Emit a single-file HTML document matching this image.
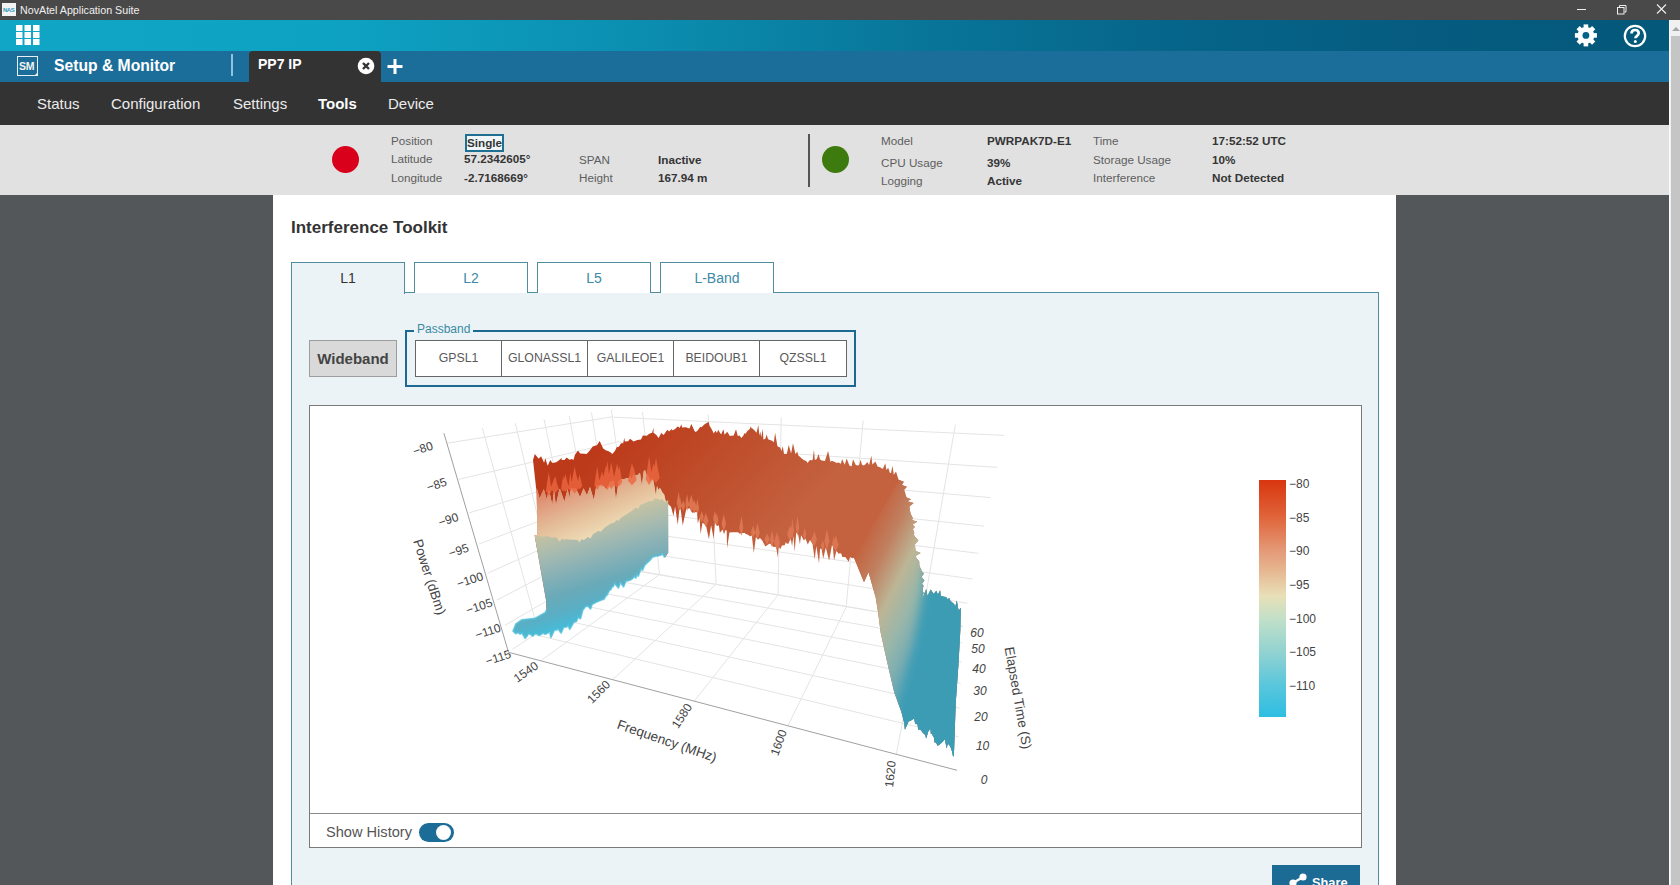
<!DOCTYPE html>
<html><head><meta charset="utf-8">
<style>
*{box-sizing:border-box;margin:0;padding:0}
html,body{width:1680px;height:885px;overflow:hidden;background:#53575a;font-family:"Liberation Sans",sans-serif}
.abs{position:absolute}
#titlebar{left:0;top:0;width:1680px;height:20px;background:#4a4949;color:#f0f0f0;font-size:10.7px}
#topbar{left:0;top:20px;width:1669px;height:31px;background:linear-gradient(90deg,#12a6c6 0%,#0ea2c2 20%,#0b8fb1 38%,#087699 55%,#06658a 70%,#055c80 85%,#04587a 100%)}
#appbar{left:0;top:51px;width:1669px;height:31px;background:#1c6e9a}
#nav{left:0;top:82px;width:1669px;height:43px;background:#333333;color:#ececec;font-size:15px}
#nav span{position:absolute;top:13px;line-height:17px;white-space:nowrap}
#status{left:0;top:125px;width:1669px;height:70px;background:#e1e1e1;font-size:11.7px}
#scroll{left:1669px;top:20px;width:11px;height:865px;background:#f0f0f0;border-left:1px solid #fdfdfd}
#panel{left:273px;top:195px;width:1123px;height:690px;background:#fff}
.lbl{position:absolute;color:#5e5e5e;white-space:nowrap;line-height:14px}
.val{position:absolute;color:#353535;font-weight:bold;white-space:nowrap;line-height:14px}
.tab{position:absolute;top:262px;width:114px;height:31px;border:1px solid #4f8e9f;border-bottom:none;background:#fff;color:#3d8aa6;font-size:14px;text-align:center;line-height:30px}
.pb{position:absolute;top:340px;height:37px;width:87px;border:1px solid #666;background:#fff;color:#595959;font-size:12.3px;text-align:center;line-height:35px}
</style></head>
<body>
<div id="titlebar" class="abs">
  <div class="abs" style="left:2px;top:3px;width:14px;height:13px;background:#f4f4f4"></div>
  <div class="abs" style="left:3px;top:7px;font-size:6px;line-height:6px;color:#2d9bc0;font-weight:bold;letter-spacing:-0.5px">NAS</div>
  <div class="abs" style="left:20px;top:3px;line-height:14px">NovAtel Application Suite</div>
  <div class="abs" style="left:1577px;top:9px;width:9px;height:1px;background:#eee"></div>
  <svg class="abs" style="left:1614px;top:2px" width="16" height="14"><rect x="3.5" y="5.5" width="6.5" height="6.5" fill="none" stroke="#eee" stroke-width="1"/><path d="M5.5 5V3.5H12V10H10.5" fill="none" stroke="#eee" stroke-width="1"/></svg>
  <svg class="abs" style="left:1654px;top:2px" width="16" height="14"><path d="M3 2.5l9 9M12 2.5l-9 9" stroke="#eee" stroke-width="1.1"/></svg>
</div>
<div id="topbar" class="abs">
  <svg class="abs" style="left:15px;top:4px" width="26" height="22"><g fill="#fff">
    <rect x="1" y="1" width="6.5" height="6" /><rect x="9.5" y="1" width="6.5" height="6"/><rect x="18" y="1" width="6.5" height="6"/>
    <rect x="1" y="8" width="6.5" height="6" /><rect x="9.5" y="8" width="6.5" height="6"/><rect x="18" y="8" width="6.5" height="6"/>
    <rect x="1" y="15" width="6.5" height="6" /><rect x="9.5" y="15" width="6.5" height="6"/><rect x="18" y="15" width="6.5" height="6"/>
  </g></svg>
  <svg class="abs" style="left:1572px;top:2px" width="28" height="28" viewBox="0 0 28 28"><g fill="#fff" transform="translate(13.9 13.4)"><circle r="8.4"/><rect x="-2.3" y="-11" width="4.6" height="5" transform="rotate(0)"/><rect x="-2.3" y="-11" width="4.6" height="5" transform="rotate(45)"/><rect x="-2.3" y="-11" width="4.6" height="5" transform="rotate(90)"/><rect x="-2.3" y="-11" width="4.6" height="5" transform="rotate(135)"/><rect x="-2.3" y="-11" width="4.6" height="5" transform="rotate(180)"/><rect x="-2.3" y="-11" width="4.6" height="5" transform="rotate(225)"/><rect x="-2.3" y="-11" width="4.6" height="5" transform="rotate(270)"/><rect x="-2.3" y="-11" width="4.6" height="5" transform="rotate(315)"/></g><circle cx="13.9" cy="13.4" r="3.4" fill="#05628a"/></svg>
  <svg class="abs" style="left:1621px;top:2px" width="28" height="28" viewBox="0 0 28 28">
    <circle cx="14" cy="14" r="10.2" fill="none" stroke="#fff" stroke-width="2.2"/>
    <path d="M10.5 11.6c0-2.3 1.5-3.6 3.6-3.6s3.6 1.3 3.6 3.3c0 2.5-3.3 2.6-3.3 5" fill="none" stroke="#fff" stroke-width="2.7"/>
    <circle cx="14.3" cy="19.6" r="1.5" fill="#fff"/>
  </svg>
</div>
<div id="appbar" class="abs">
  <div class="abs" style="left:17px;top:5px;width:21px;height:20px;border:1.5px solid #e8eef2"></div>
  <div class="abs" style="left:34px;top:21px;width:0;height:0;border-left:4px solid transparent;border-bottom:4px solid #e8eef2"></div>
  <div class="abs" style="left:19px;top:9px;font-size:10.5px;line-height:12px;color:#f3f3f3;font-weight:bold;letter-spacing:-0.3px">SM</div>
  <div class="abs" style="left:54px;top:6px;font-size:15.7px;line-height:18px;color:#fff;font-weight:bold;white-space:nowrap">Setup &amp; Monitor</div>
  <div class="abs" style="left:231px;top:3px;width:2px;height:22px;background:#8fc4e0"></div>
  <div class="abs" style="left:249px;top:0;width:132px;height:31px;background:#333;border-radius:4px 4px 0 0"></div>
  <div class="abs" style="left:258px;top:5px;font-size:14px;line-height:16px;color:#fff;font-weight:bold;white-space:nowrap">PP7 IP</div>
  <svg class="abs" style="left:356px;top:6px" width="20" height="20"><circle cx="10" cy="9" r="8.3" fill="#fff"/><path d="M7 6l6 6M13 6l-6 6" stroke="#333" stroke-width="2.4"/></svg>
  <svg class="abs" style="left:386px;top:7px" width="20" height="18"><path d="M9 1v15M1.5 8.5h15" stroke="#fff" stroke-width="3"/></svg>
</div>
<div id="nav" class="abs">
  <span style="left:37px">Status</span>
  <span style="left:111px">Configuration</span>
  <span style="left:233px">Settings</span>
  <span style="left:318px;font-weight:bold;color:#fff">Tools</span>
  <span style="left:388px">Device</span>
</div>
<div id="status" class="abs">
  <div class="abs" style="left:332px;top:21px;width:27px;height:27px;border-radius:50%;background:#d9001b"></div>
  <div class="lbl" style="left:391px;top:9px">Position</div>
  <div class="lbl" style="left:391px;top:27px">Latitude</div>
  <div class="lbl" style="left:391px;top:46px">Longitude</div>
  <div class="abs" style="left:465px;top:9px;width:39px;height:18px;border:2px solid #1f6f93;background:#f0f5f8"></div>
  <div class="val" style="left:467px;top:11px">Single</div>
  <div class="val" style="left:464px;top:27px">57.2342605°</div>
  <div class="val" style="left:464px;top:46px">-2.7168669°</div>
  <div class="lbl" style="left:579px;top:28px">SPAN</div>
  <div class="lbl" style="left:579px;top:46px">Height</div>
  <div class="val" style="left:658px;top:28px">Inactive</div>
  <div class="val" style="left:658px;top:46px">167.94 m</div>
  <div class="abs" style="left:808px;top:9px;width:2px;height:53px;background:#555"></div>
  <div class="abs" style="left:822px;top:146px;width:27px;height:27px;border-radius:50%;background:#3e7b0e;top:21px"></div>
  <div class="lbl" style="left:881px;top:9px">Model</div>
  <div class="lbl" style="left:881px;top:31px">CPU Usage</div>
  <div class="lbl" style="left:881px;top:49px">Logging</div>
  <div class="val" style="left:987px;top:9px">PWRPAK7D-E1</div>
  <div class="val" style="left:987px;top:31px">39%</div>
  <div class="val" style="left:987px;top:49px">Active</div>
  <div class="lbl" style="left:1093px;top:9px">Time</div>
  <div class="lbl" style="left:1093px;top:28px">Storage Usage</div>
  <div class="lbl" style="left:1093px;top:46px">Interference</div>
  <div class="val" style="left:1212px;top:9px">17:52:52 UTC</div>
  <div class="val" style="left:1212px;top:28px">10%</div>
  <div class="val" style="left:1212px;top:46px">Not Detected</div>
</div>
<div id="scroll" class="abs">
  <div class="abs" style="left:1px;top:16px;width:10px;height:849px;background:#c5c5c5"></div>
  <svg class="abs" style="left:0;top:5px" width="11" height="8"><path d="M2 6l4-4 4 4z" fill="#a6a6a6"/></svg>
</div>
<div id="panel" class="abs"></div>
<div class="abs" style="left:291px;top:218px;font-size:17px;line-height:20px;font-weight:bold;color:#333;white-space:nowrap">Interference Toolkit</div>
<div class="abs" style="left:291px;top:292px;width:1088px;height:600px;border:1px solid #4f8e9f;background:#ebf3f6"></div>
<div class="tab" style="left:291px;height:32px;background:#ebf3f6;color:#333">L1</div>
<div class="tab" style="left:414px">L2</div>
<div class="tab" style="left:537px">L5</div>
<div class="tab" style="left:660px">L-Band</div>
<div class="abs" style="left:309px;top:340px;width:88px;height:37px;border:1px solid #9d9d9d;background:#d9d9d9;color:#444;font-weight:bold;font-size:15px;text-align:center;line-height:35px">Wideband</div>
<div class="abs" style="left:405px;top:330px;width:451px;height:57px;border:2px solid #1c6a92"></div>
<div class="abs" style="left:414px;top:322px;padding:0 3px;background:#ebf3f6;color:#3b8aa3;font-size:12px;line-height:15px">Passband</div>
<div class="pb" style="left:415px">GPSL1</div>
<div class="pb" style="left:501px">GLONASSL1</div>
<div class="pb" style="left:587px">GALILEOE1</div>
<div class="pb" style="left:673px">BEIDOUB1</div>
<div class="pb" style="left:759px;width:88px">QZSSL1</div>
<div class="abs" style="left:309px;top:405px;width:1053px;height:443px;border:1px solid #7a7a7a;background:#fff"></div>
<div class="abs" style="left:310px;top:813px;width:1051px;height:1px;background:#8a8a8a"></div>
<div class="abs" style="left:326px;top:824px;font-size:14.6px;line-height:17px;color:#555;white-space:nowrap">Show History</div>
<div class="abs" style="left:419px;top:823px;width:35px;height:19px;border-radius:10px;background:#1b6c96"></div>
<div class="abs" style="left:436px;top:825px;width:15px;height:15px;border-radius:50%;background:#fff"></div>
<div class="abs" style="left:1272px;top:865px;width:88px;height:30px;background:#1c6b95"></div>
<svg class="abs" style="left:1288px;top:872px" width="22" height="14"><g fill="#fff"><circle cx="15" cy="5" r="3.6"/><circle cx="5" cy="11" r="3.6"/><path d="M5 11L15 5" stroke="#fff" stroke-width="2.5"/></g></svg>
<div class="abs" style="left:1312px;top:875px;font-size:12.8px;line-height:16px;color:#fff;font-weight:bold">Share</div>
<svg class="abs" style="left:0;top:0" width="1680" height="885" font-family="Liberation Sans, sans-serif"><defs>
<clipPath id="chartclip"><rect x="310" y="406" width="1051" height="407"/></clipPath>
<linearGradient id="gPlat" gradientUnits="userSpaceOnUse" x1="620" y1="430" x2="760" y2="560">
 <stop offset="0" stop-color="#bc3a1a"/><stop offset="0.5" stop-color="#bf4e2c"/><stop offset="1" stop-color="#c4623f"/></linearGradient>
<linearGradient id="gUp" gradientUnits="userSpaceOnUse" x1="560" y1="480" x2="585" y2="540">
 <stop offset="0" stop-color="#dc7a5a"/><stop offset="0.25" stop-color="#e09a7c"/><stop offset="0.6" stop-color="#e4bc98"/><stop offset="1" stop-color="#eedcb6"/></linearGradient>
<linearGradient id="gLeft" gradientUnits="userSpaceOnUse" x1="600" y1="463.4" x2="642.8" y2="602">
 <stop offset="0" stop-color="#d8c8a8"/><stop offset="0.3" stop-color="#d0ccaa"/><stop offset="0.36" stop-color="#c4c2a2"/>
 <stop offset="0.5" stop-color="#a6bab0"/><stop offset="0.65" stop-color="#86b0b6"/><stop offset="0.78" stop-color="#6aaab8"/>
 <stop offset="0.9" stop-color="#5aaec4"/><stop offset="1" stop-color="#48bad6"/></linearGradient>
<linearGradient id="gRight" gradientUnits="userSpaceOnUse" x1="848.9" y1="539.5" x2="992" y2="611">
 <stop offset="0" stop-color="#c4623f"/><stop offset="0.075" stop-color="#c4623f"/><stop offset="0.23" stop-color="#c08060"/><stop offset="0.39" stop-color="#bcb696"/>
 <stop offset="0.53" stop-color="#98b6aa"/><stop offset="0.675" stop-color="#70aab4"/><stop offset="0.84" stop-color="#4ea2b6"/><stop offset="1" stop-color="#3c9cb4"/></linearGradient>
<filter id="fb" x="-30%" y="-30%" width="160%" height="160%"><feGaussianBlur stdDeviation="5"/></filter>
<mask id="mStrip" maskUnits="userSpaceOnUse" x="800" y="500" width="250" height="350"><path d="M927 560 L1010 560 L1010 820 L875 820 L888 745 L900 695 L914 645 L921 605 Z" fill="#fff" filter="url(#fb)"/></mask>
<linearGradient id="gCbar" x1="0" y1="0" x2="0" y2="1">
 <stop offset="0" stop-color="#d8360e"/><stop offset="0.15" stop-color="#e06238"/><stop offset="0.3" stop-color="#e49a78"/>
 <stop offset="0.38" stop-color="#e6b690"/><stop offset="0.49" stop-color="#e8e0b8"/><stop offset="0.585" stop-color="#c2e0c8"/>
 <stop offset="0.73" stop-color="#90d2d2"/><stop offset="0.87" stop-color="#58c6dc"/><stop offset="1" stop-color="#2ebee2"/></linearGradient>
</defs><g clip-path="url(#chartclip)"><line x1="540.8" y1="660.8" x2="659.1" y2="574.8" stroke="#e4e4e4" stroke-width="1"/>
<line x1="612.7" y1="679.7" x2="715.9" y2="584.4" stroke="#e4e4e4" stroke-width="1"/>
<line x1="694.3" y1="701.1" x2="778.1" y2="594.9" stroke="#e4e4e4" stroke-width="1"/>
<line x1="787.9" y1="725.8" x2="846.5" y2="606.5" stroke="#e4e4e4" stroke-width="1"/>
<line x1="896.3" y1="754.3" x2="922.2" y2="619.3" stroke="#e4e4e4" stroke-width="1"/>
<line x1="535.2" y1="634.7" x2="958.5" y2="736.8" stroke="#e4e4e4" stroke-width="1"/>
<line x1="559.0" y1="619.1" x2="959.7" y2="708.2" stroke="#e4e4e4" stroke-width="1"/>
<line x1="580.4" y1="605.0" x2="960.7" y2="683.5" stroke="#e4e4e4" stroke-width="1"/>
<line x1="599.6" y1="592.4" x2="961.6" y2="662.0" stroke="#e4e4e4" stroke-width="1"/>
<line x1="617.1" y1="580.9" x2="962.4" y2="643.0" stroke="#e4e4e4" stroke-width="1"/>
<line x1="633.0" y1="570.4" x2="963.1" y2="626.2" stroke="#e4e4e4" stroke-width="1"/>
<line x1="538.6" y1="632.2" x2="482.3" y2="427.8" stroke="#e4e4e4" stroke-width="1"/>
<line x1="561.8" y1="617.2" x2="515.3" y2="423.2" stroke="#e4e4e4" stroke-width="1"/>
<line x1="582.6" y1="603.7" x2="544.0" y2="419.2" stroke="#e4e4e4" stroke-width="1"/>
<line x1="601.4" y1="591.6" x2="569.2" y2="415.7" stroke="#e4e4e4" stroke-width="1"/>
<line x1="618.3" y1="580.6" x2="591.5" y2="412.6" stroke="#e4e4e4" stroke-width="1"/>
<line x1="633.7" y1="570.6" x2="611.4" y2="409.9" stroke="#e4e4e4" stroke-width="1"/>
<line x1="447.1" y1="443.2" x2="612.4" y2="416.8" stroke="#e4e4e4" stroke-width="1"/>
<line x1="458.6" y1="479.4" x2="615.9" y2="442.3" stroke="#e4e4e4" stroke-width="1"/>
<line x1="469.2" y1="512.9" x2="619.2" y2="466.4" stroke="#e4e4e4" stroke-width="1"/>
<line x1="479.0" y1="544.0" x2="622.4" y2="489.3" stroke="#e4e4e4" stroke-width="1"/>
<line x1="488.2" y1="573.0" x2="625.4" y2="511.1" stroke="#e4e4e4" stroke-width="1"/>
<line x1="496.8" y1="600.1" x2="628.3" y2="531.9" stroke="#e4e4e4" stroke-width="1"/>
<line x1="504.8" y1="625.4" x2="631.1" y2="551.7" stroke="#e4e4e4" stroke-width="1"/>
<line x1="512.4" y1="649.2" x2="633.7" y2="570.6" stroke="#e4e4e4" stroke-width="1"/>
<line x1="659.5" y1="574.5" x2="642.5" y2="411.7" stroke="#e4e4e4" stroke-width="1"/>
<line x1="716.1" y1="584.3" x2="708.1" y2="414.4" stroke="#e4e4e4" stroke-width="1"/>
<line x1="778.0" y1="594.9" x2="781.2" y2="417.3" stroke="#e4e4e4" stroke-width="1"/>
<line x1="846.2" y1="606.6" x2="863.1" y2="420.7" stroke="#e4e4e4" stroke-width="1"/>
<line x1="921.6" y1="619.5" x2="955.4" y2="424.5" stroke="#e4e4e4" stroke-width="1"/>
<line x1="613.5" y1="417.2" x2="1004.2" y2="435.4" stroke="#e4e4e4" stroke-width="1"/>
<line x1="616.7" y1="441.9" x2="997.2" y2="467.4" stroke="#e4e4e4" stroke-width="1"/>
<line x1="619.8" y1="465.6" x2="990.5" y2="497.6" stroke="#e4e4e4" stroke-width="1"/>
<line x1="622.8" y1="488.2" x2="984.3" y2="526.2" stroke="#e4e4e4" stroke-width="1"/>
<line x1="625.6" y1="510.0" x2="978.3" y2="553.3" stroke="#e4e4e4" stroke-width="1"/>
<line x1="628.3" y1="530.8" x2="972.7" y2="579.0" stroke="#e4e4e4" stroke-width="1"/>
<line x1="631.0" y1="550.8" x2="967.4" y2="603.3" stroke="#e4e4e4" stroke-width="1"/>
<line x1="633.5" y1="570.1" x2="962.3" y2="626.5" stroke="#e4e4e4" stroke-width="1"/>
<line x1="508.5" y1="652.3" x2="957.1" y2="770.3" stroke="#a0a0a0" stroke-width="1"/>
<line x1="508.5" y1="652.3" x2="443.9" y2="433.2" stroke="#a0a0a0" stroke-width="1"/>
<path d="M533.0 460.0 L534.8 453.9 L538.5 458.4 L538.9 458.5 L541.1 456.3 L544.1 462.7 L545.3 458.3 L547.4 464.9 L547.7 465.8 L550.3 460.1 L552.3 463.1 L556.2 462.2 L557.7 461.2 L561.7 458.0 L561.7 460.0 L564.5 460.0 L566.6 457.6 L569.6 459.8 L571.8 459.0 L573.4 460.0 L574.1 457.7 L574.9 454.8 L578.1 450.6 L580.1 453.6 L584.2 453.7 L586.6 454.0 L589.4 451.0 L592.7 446.5 L595.7 445.6 L596.9 445.2 L599.7 440.9 L603.2 448.4 L606.1 450.4 L608.0 450.9 L610.4 452.2 L612.3 454.0 L614.9 450.9 L616.7 447.2 L618.9 446.8 L621.0 443.2 L623.2 443.2 L624.3 437.7 L624.8 441.6 L628.1 441.3 L630.1 438.7 L633.6 441.6 L637.3 440.0 L641.0 439.4 L642.9 435.4 L646.8 435.8 L649.3 433.7 L652.1 432.7 L653.5 427.7 L653.5 432.8 L656.4 435.1 L658.6 437.9 L661.3 433.1 L663.7 435.0 L667.3 429.7 L669.1 431.6 L671.7 428.8 L671.8 430.6 L674.8 429.2 L678.0 426.2 L679.5 428.1 L681.5 424.3 L682.0 427.6 L685.9 427.3 L689.4 428.4 L691.4 423.9 L694.5 431.1 L695.8 431.9 L695.9 432.0 L697.6 430.5 L700.3 426.7 L701.6 427.2 L704.0 424.7 L705.8 423.4 L707.6 422.5 L708.8 422.0 L709.5 425.7 L710.8 427.7 L711.7 429.3 L713.1 431.9 L713.5 433.5 L715.6 430.8 L717.0 432.9 L718.1 429.7 L721.1 434.6 L723.4 429.2 L724.6 434.7 L727.2 431.7 L729.9 435.9 L731.5 435.7 L733.7 435.4 L736.0 429.2 L737.9 436.3 L739.3 435.3 L741.4 437.9 L743.4 435.5 L744.3 433.2 L745.5 433.7 L747.6 430.8 L749.8 428.9 L750.7 426.2 L751.7 428.4 L752.5 428.6 L754.8 430.7 L756.6 432.8 L758.3 425.1 L759.4 435.6 L760.3 431.6 L761.2 437.2 L762.8 428.9 L763.4 439.4 L765.4 438.8 L766.6 434.5 L768.1 439.3 L771.3 440.4 L772.2 440.8 L773.9 442.3 L775.1 432.8 L777.4 445.9 L778.1 446.7 L780.1 447.5 L781.6 451.0 L782.8 446.0 L784.0 454.0 L786.8 453.9 L788.7 444.9 L791.1 453.4 L793.0 443.2 L795.4 454.0 L795.7 454.0 L797.2 451.4 L798.4 455.4 L799.9 456.7 L801.8 458.5 L804.1 460.2 L806.3 460.9 L807.5 462.9 L810.0 460.1 L812.5 460.3 L814.0 449.8 L814.8 459.9 L816.7 459.0 L818.6 453.9 L820.1 459.5 L821.7 460.6 L824.9 461.0 L828.1 450.9 L830.5 462.0 L831.7 460.8 L833.7 461.6 L836.8 462.9 L838.6 462.5 L840.9 463.7 L842.1 459.1 L844.7 464.7 L846.7 458.4 L849.4 465.5 L851.5 466.5 L853.0 459.3 L855.8 464.9 L857.9 465.4 L859.1 465.1 L860.6 459.7 L861.9 464.5 L863.5 465.4 L865.0 464.7 L867.3 461.9 L868.8 464.4 L869.1 465.0 L871.3 455.4 L872.4 464.5 L875.4 461.6 L877.6 466.4 L880.6 467.6 L880.9 468.0 L882.9 468.7 L885.3 463.3 L886.4 470.1 L888.2 467.8 L890.0 473.1 L891.0 473.0 L892.5 465.7 L893.8 474.8 L896.0 471.6 L898.4 479.3 L899.2 480.0 L903.8 481.8 L901.9 484.9 L906.9 486.8 L904.0 490.0 L905.2 492.9 L905.5 495.0 L906.6 497.5 L911.1 499.2 L907.4 501.3 L913.7 502.9 L909.4 506.4 L909.8 509.6 L910.0 510.7 L910.6 513.7 L912.8 518.0 L912.1 519.9 L917.2 521.8 L912.6 524.6 L914.9 527.1 L912.9 529.1 L914.4 533.2 L913.7 534.2 L914.6 536.3 L918.4 540.5 L915.0 544.3 L915.2 547.9 L915.7 550.9 L920.7 553.0 L915.5 556.0 L916.7 558.5 L919.2 561.2 L919.4 565.4 L919.9 566.9 L921.7 570.3 L921.0 570.4 L923.9 573.4 L921.6 577.1 L924.4 580.4 L922.0 583.8 L923.5 585.8 L922.5 590.1 L923.7 593.4 L922.6 595.2 L922.7 597.5 L926.2 588.9 L927.5 595.9 L930.7 589.6 L933.5 593.7 L933.6 594.0 L936.3 590.7 L937.9 594.6 L940.1 590.3 L940.8 595.7 L944.0 596.8 L946.1 597.0 L947.3 599.0 L949.5 598.3 L949.9 600.3 L952.2 602.4 L953.9 603.7 L954.7 605.6 L955.3 606.6 L956.8 600.6 L958.6 610.8 L960.7 607.8 L960.7 613.8 L960.3 630.8 L958.4 665.2 L955.7 703.2 L953.9 755.6 L953.1 756.7 L952.1 751.6 L950.9 748.2 L950.3 746.6 L947.9 743.6 L946.6 748.6 L944.9 739.3 L941.9 742.4 L939.3 744.8 L937.6 745.7 L936.0 742.4 L934.6 742.6 L933.9 737.6 L932.7 735.4 L932.0 733.2 L930.9 734.3 L930.4 728.5 L928.0 732.1 L926.3 738.5 L925.0 734.8 L922.3 732.2 L921.2 730.6 L919.8 729.2 L918.1 730.0 L917.8 725.8 L916.4 723.5 L915.3 724.3 L914.1 718.6 L910.3 721.1 L908.7 721.3 L904.9 729.7 L904.2 723.0 L901.5 712.2 L894.2 692.3 L887.0 661.6 L880.7 632.7 L878.0 612.0 L875.7 597.5 L868.5 572.2 L864.0 582.2 L854.0 557.8 L852.2 558.2 L850.1 557.0 L848.7 561.7 L845.3 557.1 L842.3 556.9 L841.4 554.1 L840.0 553.1 L838.9 554.1 L836.4 551.1 L834.0 560.4 L832.8 546.4 L832.0 545.0 L829.1 560.7 L825.8 547.4 L823.2 558.8 L821.5 548.7 L820.1 548.7 L819.0 563.3 L816.3 546.0 L814.7 559.4 L812.5 543.9 L810.0 540.0 L807.8 544.5 L805.4 538.4 L803.9 540.5 L801.1 535.2 L799.9 544.2 L798.2 534.7 L796.2 532.4 L794.7 551.8 L793.4 536.0 L792.1 546.2 L790.7 538.4 L788.4 543.8 L786.5 543.6 L786.0 542.0 L784.7 545.3 L781.9 545.4 L780.3 549.2 L778.8 546.7 L777.6 557.5 L776.3 546.9 L773.1 546.8 L769.9 543.5 L768.2 544.6 L765.4 546.5 L762.2 540.5 L760.0 537.9 L758.1 539.4 L755.9 536.9 L753.8 553.0 L751.8 535.2 L750.5 536.6 L747.5 534.6 L745.6 534.1 L745.0 533.0 L742.7 533.1 L741.3 532.9 L739.7 533.8 L738.1 532.3 L735.6 532.2 L731.9 532.3 L729.4 532.5 L727.1 548.2 L726.7 530.4 L725.2 530.2 L724.1 534.4 L722.6 529.4 L719.9 532.8 L718.8 525.3 L717.3 526.0 L715.8 524.5 L715.0 522.0 L713.7 538.7 L711.1 525.2 L708.9 539.2 L706.1 525.9 L704.7 524.5 L703.4 523.2 L702.5 522.8 L700.6 534.1 L699.5 517.6 L697.8 523.5 L697.0 512.0 L694.7 512.3 L692.1 512.7 L690.0 508.4 L686.4 508.6 L682.7 525.5 L680.6 508.4 L679.3 510.0 L677.8 524.7 L675.1 506.6 L673.5 515.9 L671.0 506.7 L668.0 504.0 L668.2 552.7 L664.9 557.5 L663.0 553.8 L658.8 555.5 L654.7 556.2 L652.7 556.7 L649.7 560.3 L646.7 563.1 L644.6 565.0 L642.4 570.0 L641.4 568.3 L641.0 568.5 L638.2 576.0 L636.9 573.8 L635.7 577.9 L634.5 576.1 L632.2 578.7 L630.1 580.0 L625.8 580.9 L623.5 586.6 L620.5 582.1 L618.4 587.7 L615.0 583.7 L614.5 583.1 L613.1 586.6 L611.9 586.8 L610.9 589.3 L609.0 590.7 L606.9 595.0 L605.5 596.2 L603.8 599.3 L602.8 599.3 L599.5 600.7 L595.4 602.4 L591.9 604.5 L590.5 608.8 L588.1 605.8 L586.7 606.1 L585.2 606.6 L582.6 610.3 L580.4 618.6 L577.9 616.9 L576.4 621.3 L574.1 621.9 L573.4 622.8 L569.8 629.1 L568.3 625.4 L566.6 626.8 L563.5 627.2 L561.1 632.8 L558.2 628.8 L555.9 630.0 L554.3 630.1 L550.9 637.2 L550.0 631.6 L548.4 632.6 L545.3 634.1 L543.1 633.0 L539.2 635.3 L536.4 633.6 L534.5 633.8 L532.9 636.0 L528.9 633.2 L525.3 638.2 L521.9 632.7 L520.1 633.9 L518.2 632.3 L515.8 633.5 L513.2 631.0 L516.0 624.0 L522.0 619.9 L535.2 618.4 L545.5 612.5 L546.5 610.0 L546.1 600.6 L534.6 535.3 L537.5 535.0 L536.7 493.7 L533.0 460.0Z" fill="url(#gPlat)"/>
<path d="M835.8 535.3 L838.6 544.7 L835.8 551.7 L833.0 544.7ZM833.7 536.4 L835.2 543.5 L833.7 549.6 L832.1 543.5ZM822.7 540.2 L824.5 545.8 L822.7 551.3 L821.0 545.8ZM826.9 528.9 L829.4 541.4 L826.9 549.8 L824.4 541.4ZM814.4 531.2 L816.9 539.7 L814.4 546.3 L811.8 539.7ZM813.8 534.1 L816.5 540.2 L813.8 545.8 L811.0 540.2ZM804.7 528.0 L806.3 534.4 L804.7 540.1 L803.1 534.4ZM797.5 515.5 L799.2 527.8 L797.5 536.1 L795.8 527.8ZM792.4 518.3 L793.9 530.7 L792.4 539.0 L790.8 530.7ZM789.9 525.5 L792.8 534.5 L789.9 541.3 L787.1 534.5ZM778.1 535.4 L780.0 542.8 L778.1 549.0 L776.3 542.8ZM776.8 531.9 L779.5 542.2 L776.8 549.7 L774.1 542.2ZM767.1 533.4 L769.7 539.3 L767.1 544.8 L764.5 539.3ZM772.0 530.0 L774.0 540.2 L772.0 547.5 L770.0 540.2ZM757.5 522.8 L759.8 532.8 L757.5 540.1 L755.1 532.8ZM753.1 525.3 L755.3 532.5 L753.1 538.6 L750.9 532.5ZM741.2 517.6 L743.3 528.0 L741.2 535.5 L739.2 528.0ZM741.7 516.1 L743.3 527.6 L741.7 535.5 L740.1 527.6ZM716.8 513.1 L718.4 520.3 L716.8 526.3 L715.3 520.3ZM723.8 513.9 L726.1 524.0 L723.8 531.3 L721.5 524.0ZM714.9 510.4 L716.7 518.5 L714.9 525.0 L713.1 518.5ZM705.8 512.8 L708.6 520.8 L705.8 527.2 L703.1 520.8ZM701.7 511.0 L703.8 517.0 L701.7 522.6 L699.5 517.0ZM697.4 498.4 L699.1 508.3 L697.4 515.6 L695.7 508.3ZM691.3 494.6 L694.0 504.7 L691.3 512.0 L688.5 504.7ZM694.3 499.7 L696.8 507.3 L694.3 513.6 L691.9 507.3ZM683.2 500.3 L685.1 506.0 L683.2 511.4 L681.2 506.0ZM687.1 494.1 L688.9 504.1 L687.1 511.4 L685.3 504.1ZM678.6 491.4 L680.5 502.8 L678.6 510.7 L676.7 502.8ZM680.1 497.6 L681.7 505.0 L680.1 511.2 L678.5 505.0Z" fill="#e07a56" opacity="0.85"/>
<path d="M854.0 557.8 L899.2 480.0 L903.8 481.8 L901.9 484.9 L906.9 486.8 L904.0 490.0 L905.2 492.9 L905.5 495.0 L906.6 497.5 L911.1 499.2 L907.4 501.3 L913.7 502.9 L909.4 506.4 L909.8 509.6 L910.0 510.7 L910.6 513.7 L912.8 518.0 L912.1 519.9 L917.2 521.8 L912.6 524.6 L914.9 527.1 L912.9 529.1 L914.4 533.2 L913.7 534.2 L914.6 536.3 L918.4 540.5 L915.0 544.3 L915.2 547.9 L915.7 550.9 L920.7 553.0 L915.5 556.0 L916.7 558.5 L919.2 561.2 L919.4 565.4 L919.9 566.9 L921.7 570.3 L921.0 570.4 L923.9 573.4 L921.6 577.1 L924.4 580.4 L922.0 583.8 L923.5 585.8 L922.5 590.1 L923.7 593.4 L922.6 595.2 L922.7 597.5 L926.2 588.9 L927.5 595.9 L930.7 589.6 L933.5 593.7 L933.6 594.0 L936.3 590.7 L937.9 594.6 L940.1 590.3 L940.8 595.7 L944.0 596.8 L946.1 597.0 L947.3 599.0 L949.5 598.3 L949.9 600.3 L952.2 602.4 L953.9 603.7 L954.7 605.6 L955.3 606.6 L956.8 600.6 L958.6 610.8 L960.7 607.8 L960.7 613.8 L960.3 630.8 L958.4 665.2 L955.7 703.2 L953.9 755.6 L953.1 756.7 L952.1 751.6 L950.9 748.2 L950.3 746.6 L947.9 743.6 L946.6 748.6 L944.9 739.3 L941.9 742.4 L939.3 744.8 L937.6 745.7 L936.0 742.4 L934.6 742.6 L933.9 737.6 L932.7 735.4 L932.0 733.2 L930.9 734.3 L930.4 728.5 L928.0 732.1 L926.3 738.5 L925.0 734.8 L922.3 732.2 L921.2 730.6 L919.8 729.2 L918.1 730.0 L917.8 725.8 L916.4 723.5 L915.3 724.3 L914.1 718.6 L910.3 721.1 L908.7 721.3 L904.9 729.7 L904.2 723.0 L901.5 712.2 L894.2 692.3 L887.0 661.6 L880.7 632.7 L878.0 612.0 L875.7 597.5 L868.5 572.2 L864.0 582.2 L854.0 557.8Z" fill="url(#gRight)"/>
<path d="M854.0 557.8 L899.2 480.0 L903.8 481.8 L901.9 484.9 L906.9 486.8 L904.0 490.0 L905.2 492.9 L905.5 495.0 L906.6 497.5 L911.1 499.2 L907.4 501.3 L913.7 502.9 L909.4 506.4 L909.8 509.6 L910.0 510.7 L910.6 513.7 L912.8 518.0 L912.1 519.9 L917.2 521.8 L912.6 524.6 L914.9 527.1 L912.9 529.1 L914.4 533.2 L913.7 534.2 L914.6 536.3 L918.4 540.5 L915.0 544.3 L915.2 547.9 L915.7 550.9 L920.7 553.0 L915.5 556.0 L916.7 558.5 L919.2 561.2 L919.4 565.4 L919.9 566.9 L921.7 570.3 L921.0 570.4 L923.9 573.4 L921.6 577.1 L924.4 580.4 L922.0 583.8 L923.5 585.8 L922.5 590.1 L923.7 593.4 L922.6 595.2 L922.7 597.5 L926.2 588.9 L927.5 595.9 L930.7 589.6 L933.5 593.7 L933.6 594.0 L936.3 590.7 L937.9 594.6 L940.1 590.3 L940.8 595.7 L944.0 596.8 L946.1 597.0 L947.3 599.0 L949.5 598.3 L949.9 600.3 L952.2 602.4 L953.9 603.7 L954.7 605.6 L955.3 606.6 L956.8 600.6 L958.6 610.8 L960.7 607.8 L960.7 613.8 L960.3 630.8 L958.4 665.2 L955.7 703.2 L953.9 755.6 L953.1 756.7 L952.1 751.6 L950.9 748.2 L950.3 746.6 L947.9 743.6 L946.6 748.6 L944.9 739.3 L941.9 742.4 L939.3 744.8 L937.6 745.7 L936.0 742.4 L934.6 742.6 L933.9 737.6 L932.7 735.4 L932.0 733.2 L930.9 734.3 L930.4 728.5 L928.0 732.1 L926.3 738.5 L925.0 734.8 L922.3 732.2 L921.2 730.6 L919.8 729.2 L918.1 730.0 L917.8 725.8 L916.4 723.5 L915.3 724.3 L914.1 718.6 L910.3 721.1 L908.7 721.3 L904.9 729.7 L904.2 723.0 L901.5 712.2 L894.2 692.3 L887.0 661.6 L880.7 632.7 L878.0 612.0 L875.7 597.5 L868.5 572.2 L864.0 582.2 L854.0 557.8Z" fill="#3c9cb4" mask="url(#mStrip)"/>
<path d="M536.7 488.0 L539.6 498.5 L543.8 489.1 L546.8 499.5 L548.9 489.4 L552.3 504.9 L554.1 489.2 L555.8 505.5 L559.4 489.0 L560.0 489.0 L564.4 501.4 L567.7 488.7 L569.3 498.0 L570.9 488.6 L573.2 488.4 L576.0 488.7 L580.1 497.0 L583.5 488.3 L587.0 495.2 L589.3 488.7 L590.0 487.0 L593.9 500.1 L596.3 485.8 L598.6 485.6 L602.3 484.6 L606.2 489.3 L610.0 482.0 L613.9 480.8 L615.9 499.7 L618.7 481.0 L621.3 479.3 L624.5 478.9 L626.7 477.9 L629.1 477.9 L630.0 476.0 L631.7 478.9 L633.4 474.7 L637.0 475.5 L640.0 472.8 L641.9 485.9 L643.6 471.6 L645.0 470.0 L646.8 475.0 L648.3 475.4 L650.9 481.4 L652.0 478.0 L653.3 480.3 L655.9 495.2 L657.0 485.9 L658.3 489.7 L660.0 488.0 L661.4 490.5 L662.4 492.4 L664.2 494.6 L666.1 503.0 L667.7 500.8 L668.2 500.0 L668.2 552.7 L664.9 557.5 L663.0 553.8 L658.8 555.5 L654.7 556.2 L652.7 556.7 L649.7 560.3 L646.7 563.1 L644.6 565.0 L642.4 570.0 L641.4 568.3 L641.0 568.5 L638.2 576.0 L636.9 573.8 L635.7 577.9 L634.5 576.1 L632.2 578.7 L630.1 580.0 L625.8 580.9 L623.5 586.6 L620.5 582.1 L618.4 587.7 L615.0 583.7 L614.5 583.1 L613.1 586.6 L611.9 586.8 L610.9 589.3 L609.0 590.7 L606.9 595.0 L605.5 596.2 L603.8 599.3 L602.8 599.3 L599.5 600.7 L595.4 602.4 L591.9 604.5 L590.5 608.8 L588.1 605.8 L586.7 606.1 L585.2 606.6 L582.6 610.3 L580.4 618.6 L577.9 616.9 L576.4 621.3 L574.1 621.9 L573.4 622.8 L569.8 629.1 L568.3 625.4 L566.6 626.8 L563.5 627.2 L561.1 632.8 L558.2 628.8 L555.9 630.0 L554.3 630.1 L550.9 637.2 L550.0 631.6 L548.4 632.6 L545.3 634.1 L543.1 633.0 L539.2 635.3 L536.4 633.6 L534.5 633.8 L532.9 636.0 L528.9 633.2 L525.3 638.2 L521.9 632.7 L520.1 633.9 L518.2 632.3 L515.8 633.5 L513.2 631.0 L516.0 624.0 L522.0 619.9 L535.2 618.4 L545.5 612.5 L546.5 610.0 L546.1 600.6 L534.6 535.3 L537.5 535.0 L536.7 493.7Z" fill="url(#gLeft)"/>
<path d="M536.7 488.0 L539.6 498.5 L543.8 489.1 L546.8 499.5 L548.9 489.4 L552.3 504.9 L554.1 489.2 L555.8 505.5 L559.4 489.0 L560.0 489.0 L564.4 501.4 L567.7 488.7 L569.3 498.0 L570.9 488.6 L573.2 488.4 L576.0 488.7 L580.1 497.0 L583.5 488.3 L587.0 495.2 L589.3 488.7 L590.0 487.0 L593.9 500.1 L596.3 485.8 L598.6 485.6 L602.3 484.6 L606.2 489.3 L610.0 482.0 L613.9 480.8 L615.9 499.7 L618.7 481.0 L621.3 479.3 L624.5 478.9 L626.7 477.9 L629.1 477.9 L630.0 476.0 L631.7 478.9 L633.4 474.7 L637.0 475.5 L640.0 472.8 L641.9 485.9 L643.6 471.6 L645.0 470.0 L646.8 475.0 L648.3 475.4 L650.9 481.4 L652.0 478.0 L653.3 480.3 L655.9 495.2 L657.0 485.9 L658.3 489.7 L660.0 488.0 L661.4 490.5 L662.4 492.4 L664.2 494.6 L666.1 503.0 L667.7 500.8 L668.2 500.0 L668.2 500.0 L665.3 501.9 L661.8 499.1 L660.3 499.9 L658.0 498.9 L655.0 498.0 L652.0 501.3 L648.8 500.9 L646.3 502.4 L642.5 503.9 L640.0 505.0 L638.6 508.4 L636.5 507.6 L633.1 509.6 L631.7 511.0 L629.2 512.4 L625.5 515.1 L625.0 515.0 L622.6 516.7 L620.5 518.0 L618.8 521.2 L617.4 519.6 L614.0 522.8 L611.7 523.3 L610.0 524.0 L607.7 525.4 L604.5 527.7 L600.7 531.8 L598.5 530.9 L598.0 531.0 L595.0 533.0 L593.1 534.1 L590.5 538.5 L588.0 537.0 L586.5 537.9 L583.8 540.0 L581.7 539.1 L579.2 542.5 L578.0 540.0 L574.9 539.8 L571.3 539.5 L569.0 539.4 L566.0 539.0 L564.4 540.1 L562.3 538.4 L559.4 541.5 L556.5 537.6 L556.0 537.0 L551.7 537.7 L549.7 536.7 L546.0 536.0 L544.5 536.7 L540.7 536.2 L538.4 536.0 L536.8 536.3 L535.0 536.0 L537.5 535.0 L536.7 493.7Z" fill="url(#gUp)"/>
<path d="M611.3 462.3 L615.3 483.6 L611.3 489.0 L607.2 483.6ZM574.7 466.4 L578.9 488.1 L574.7 493.5 L570.4 488.1ZM653.6 463.5 L657.2 477.7 L653.6 481.2 L650.0 477.7ZM617.1 463.4 L621.6 482.7 L617.1 487.5 L612.7 482.7ZM606.0 465.6 L610.4 483.9 L606.0 488.5 L601.7 483.9ZM619.5 466.0 L622.2 482.0 L619.5 486.0 L616.7 482.0ZM602.0 471.5 L605.5 483.6 L602.0 486.6 L598.5 483.6ZM632.0 462.7 L636.1 480.7 L632.0 485.2 L627.9 480.7ZM656.0 458.0 L659.7 478.1 L656.0 483.1 L652.3 478.1ZM554.7 477.2 L559.1 489.3 L554.7 492.3 L550.2 489.3ZM575.6 472.5 L579.8 487.1 L575.6 490.7 L571.3 487.1ZM633.7 466.7 L636.5 479.9 L633.7 483.2 L630.9 479.9ZM570.3 472.3 L572.4 487.8 L570.3 491.7 L568.3 487.8ZM605.6 467.6 L608.6 483.7 L605.6 487.7 L602.6 483.7ZM563.2 475.4 L565.3 488.4 L563.2 491.6 L561.1 488.4ZM649.1 456.2 L652.5 479.3 L649.1 485.1 L645.7 479.3ZM555.5 475.8 L557.8 489.4 L555.5 492.8 L553.2 489.4ZM579.6 474.2 L582.3 486.3 L579.6 489.3 L576.9 486.3ZM565.4 474.0 L569.0 488.3 L565.4 491.8 L561.7 488.3ZM597.2 466.2 L600.1 485.0 L597.2 489.7 L594.3 485.0ZM607.4 460.6 L610.1 484.4 L607.4 490.3 L604.6 484.4ZM548.8 471.9 L551.7 490.8 L548.8 495.6 L545.8 490.8Z" fill="#ec6640" opacity="0.8"/>
<path d="M664.9 557.5 L663.0 553.8 L658.8 555.5 L654.7 556.2 L652.7 556.7 L649.7 560.3 L646.7 563.1 L644.6 565.0 L642.4 570.0 L641.4 568.3 L641.0 568.5 L638.2 576.0 L636.9 573.8 L635.7 577.9 L634.5 576.1 L632.2 578.7 L630.1 580.0 L625.8 580.9 L623.5 586.6 L620.5 582.1 L618.4 587.7 L615.0 583.7 L614.5 583.1 L613.1 586.6 L611.9 586.8 L610.9 589.3 L609.0 590.7 L606.9 595.0 L605.5 596.2 L603.8 599.3 L602.8 599.3 L599.5 600.7 L595.4 602.4 L591.9 604.5 L590.5 608.8 L588.1 605.8 L586.7 606.1 L585.2 606.6 L582.6 610.3 L580.4 618.6 L577.9 616.9 L576.4 621.3 L574.1 621.9 L573.4 622.8 L569.8 629.1 L568.3 625.4 L566.6 626.8 L563.5 627.2 L561.1 632.8 L558.2 628.8 L555.9 630.0 L554.3 630.1 L550.9 637.2 L550.0 631.6 L548.4 632.6 L545.3 634.1 L543.1 633.0 L539.2 635.3 L536.4 633.6 L534.5 633.8 L532.9 636.0 L528.9 633.2 L525.3 638.2 L521.9 632.7 L520.1 633.9 L518.2 632.3 L515.8 633.5 L513.2 631.0 L516.0 624.0 L522.0 619.9 L535.2 618.4 L545.5 612.5 L546.5 610.0" fill="none" stroke="#4cc2de" stroke-width="2" stroke-linejoin="round" opacity="0.75"/>
<text x="422.9" y="448.5" font-size="12" fill="#444" text-anchor="middle" dominant-baseline="central" transform="rotate(-18 422.9 448.5)" >−80</text><text x="436.7" y="484.6" font-size="12" fill="#444" text-anchor="middle" dominant-baseline="central" transform="rotate(-18 436.7 484.6)" >−85</text><text x="448.4" y="519.8" font-size="12" fill="#444" text-anchor="middle" dominant-baseline="central" transform="rotate(-18 448.4 519.8)" >−90</text><text x="458.7" y="550.6" font-size="12" fill="#444" text-anchor="middle" dominant-baseline="central" transform="rotate(-18 458.7 550.6)" >−95</text><text x="469.9" y="580" font-size="12" fill="#444" text-anchor="middle" dominant-baseline="central" transform="rotate(-18 469.9 580)" >−100</text><text x="479.2" y="606.4" font-size="12" fill="#444" text-anchor="middle" dominant-baseline="central" transform="rotate(-18 479.2 606.4)" >−105</text><text x="488" y="631.3" font-size="12" fill="#444" text-anchor="middle" dominant-baseline="central" transform="rotate(-18 488 631.3)" >−110</text><text x="498.3" y="657.7" font-size="12" fill="#444" text-anchor="middle" dominant-baseline="central" transform="rotate(-18 498.3 657.7)" >−115</text><text x="429.4" y="577" font-size="13.5" fill="#444" text-anchor="middle" dominant-baseline="central" transform="rotate(72 429.4 577)" >Power (dBm)</text><text x="526" y="672" font-size="12" fill="#444" text-anchor="middle" dominant-baseline="central" transform="rotate(-35 526 672)" >1540</text><text x="598.7" y="692" font-size="12" fill="#444" text-anchor="middle" dominant-baseline="central" transform="rotate(-45 598.7 692)" >1560</text><text x="682" y="715.9" font-size="12" fill="#444" text-anchor="middle" dominant-baseline="central" transform="rotate(-57 682 715.9)" >1580</text><text x="778.8" y="742.7" font-size="12" fill="#444" text-anchor="middle" dominant-baseline="central" transform="rotate(-70 778.8 742.7)" >1600</text><text x="890.4" y="774" font-size="12" fill="#444" text-anchor="middle" dominant-baseline="central" transform="rotate(-84 890.4 774)" >1620</text><text x="667" y="741" font-size="13.5" fill="#444" text-anchor="middle" dominant-baseline="central" transform="rotate(19 667 741)" >Frequency (MHz)</text><text x="984" y="780" font-size="12" fill="#444" text-anchor="middle" dominant-baseline="central" transform="rotate(0 984 780)" font-style="italic">0</text><text x="982.6" y="745.7" font-size="12" fill="#444" text-anchor="middle" dominant-baseline="central" transform="rotate(0 982.6 745.7)" font-style="italic">10</text><text x="981" y="716.8" font-size="12" fill="#444" text-anchor="middle" dominant-baseline="central" transform="rotate(0 981 716.8)" font-style="italic">20</text><text x="980" y="690.6" font-size="12" fill="#444" text-anchor="middle" dominant-baseline="central" transform="rotate(0 980 690.6)" font-style="italic">30</text><text x="979" y="668.9" font-size="12" fill="#444" text-anchor="middle" dominant-baseline="central" transform="rotate(0 979 668.9)" font-style="italic">40</text><text x="978" y="649" font-size="12" fill="#444" text-anchor="middle" dominant-baseline="central" transform="rotate(0 978 649)" font-style="italic">50</text><text x="977" y="632.7" font-size="12" fill="#444" text-anchor="middle" dominant-baseline="central" transform="rotate(0 977 632.7)" font-style="italic">60</text><text x="1018" y="698" font-size="13.5" fill="#444" text-anchor="middle" dominant-baseline="central" transform="rotate(80 1018 698)" >Elapsed Time (S)</text><rect x="1259" y="480" width="27" height="237" fill="url(#gCbar)"/><text x="1289" y="484.2" font-size="12" fill="#444" text-anchor="start" dominant-baseline="central" transform="rotate(0 1289 484.2)" >−80</text><text x="1289" y="517.8" font-size="12" fill="#444" text-anchor="start" dominant-baseline="central" transform="rotate(0 1289 517.8)" >−85</text><text x="1289" y="551.4" font-size="12" fill="#444" text-anchor="start" dominant-baseline="central" transform="rotate(0 1289 551.4)" >−90</text><text x="1289" y="585.0" font-size="12" fill="#444" text-anchor="start" dominant-baseline="central" transform="rotate(0 1289 585.0)" >−95</text><text x="1289" y="618.6" font-size="12" fill="#444" text-anchor="start" dominant-baseline="central" transform="rotate(0 1289 618.6)" >−100</text><text x="1289" y="652.2" font-size="12" fill="#444" text-anchor="start" dominant-baseline="central" transform="rotate(0 1289 652.2)" >−105</text><text x="1289" y="685.8" font-size="12" fill="#444" text-anchor="start" dominant-baseline="central" transform="rotate(0 1289 685.8)" >−110</text></g></svg>
</body></html>
